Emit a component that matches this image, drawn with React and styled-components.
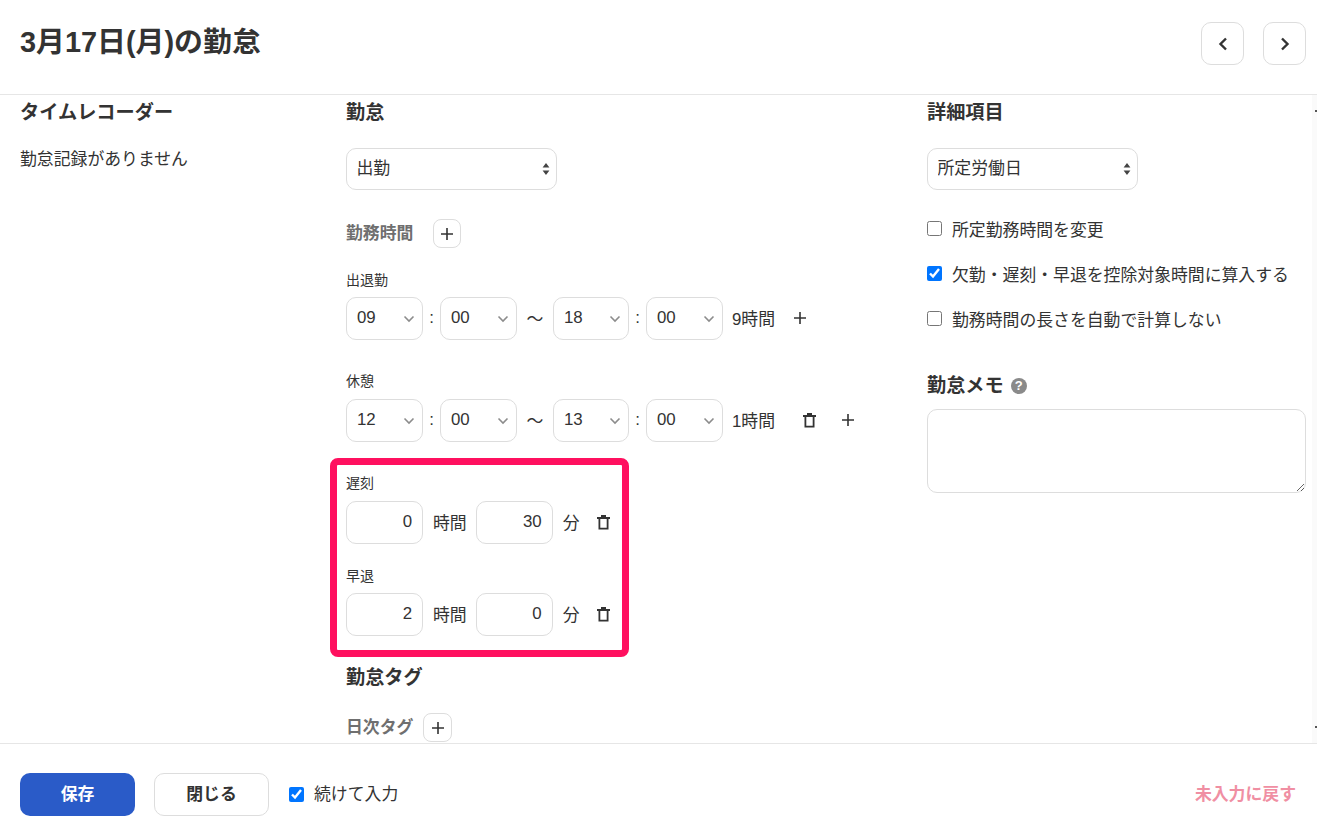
import React from "react";
import styled, { createGlobalStyle } from "styled-components";

const Global = createGlobalStyle`
  html, body { margin: 0; padding: 0; background: #fff; }
  body {
    font-family: "Liberation Sans", "Noto Sans CJK JP", sans-serif;
    font-size: 16.85px;
    color: #333;
    overflow: hidden;
  }
  * { box-sizing: border-box; }
`;

const Page = styled.div`
  width: 1317px;
  height: 837px;
  display: flex;
  flex-direction: column;
`;

const Header = styled.header`
  height: 95px;
  flex: none;
  border-bottom: 1px solid #e6e6e6;
  padding: 23px 11px 0 20px;
  display: flex;
  justify-content: space-between;
  align-items: flex-start;
`;

const Title = styled.h1`
  margin: 0;
  font-size: 28.9px;
  line-height: 38px;
  font-weight: 700;
`;

const NavGroup = styled.div`
  display: flex;
  gap: 19px;
  margin-top: -1px;
`;

const NavButton = styled.button`
  width: 43px;
  height: 43px;
  padding: 0;
  background: #fff;
  border: 1px solid #ddd;
  border-radius: 10px;
  color: #333;
  display: flex;
  align-items: center;
  justify-content: center;
`;

const Body = styled.main`
  position: relative;
  flex: 1;
  min-height: 0;
  overflow: hidden;
  padding: 6px 11px 0 20px;
  display: grid;
  grid-template-columns: 326px 581px 379px;
  align-items: start;
`;

const ScrollRail = styled.div`
  position: absolute;
  top: 0;
  right: 0;
  bottom: 0;
  width: 5px;
  background: #fafafa;

  &::before,
  &::after {
    content: "";
    position: absolute;
    right: 0;
    width: 2px;
    height: 2px;
    background: #555;
  }
  &::before { top: 15px; }
  &::after { bottom: 15px; }
`;

const Column = styled.section`
  display: flex;
  flex-direction: column;
  align-items: flex-start;
`;

const Heading = styled.h2`
  margin: ${(p) => p.$mt || 0}px 0 0;
  font-size: 19.2px;
  line-height: 24px;
  font-weight: 700;
`;

const Paragraph = styled.p`
  margin: 23px 0 0;
  line-height: 24px;
`;

const SelectWrap = styled.div`
  position: relative;
  width: ${(p) => p.$w}px;
  height: ${(p) => p.$h}px;
  flex: none;
  margin-top: ${(p) => p.$mt || 0}px;
`;

const Select = styled.select`
  appearance: none;
  width: 100%;
  height: 100%;
  border: 1px solid #ddd;
  border-radius: 10px;
  background: #fff;
  color: #333;
  font: inherit;
  padding: 0 10px 2px ${(p) => p.$pl || 10}px;
  outline: none;
`;

const SelectIcon = styled.svg`
  position: absolute;
  pointer-events: none;
  top: 50%;
  right: ${(p) => p.$r}px;
  transform: translateY(-50%);
`;

const SubHeadRow = styled.div`
  display: flex;
  align-items: center;
  margin-top: ${(p) => p.$mt}px;
  gap: ${(p) => p.$gap}px;
`;

const SubHead = styled.h3`
  margin: 0;
  font-size: 16.85px;
  line-height: 24px;
  font-weight: 700;
  color: #6f6f6f;
`;

const AddButton = styled.button`
  width: ${(p) => p.$w}px;
  height: 29px;
  padding: 0;
  background: #fff;
  border: 1px solid #ddd;
  border-radius: 8px;
  color: #333;
  display: flex;
  align-items: center;
  justify-content: center;
`;

const FieldLabel = styled.div`
  font-size: 14px;
  line-height: 18px;
  margin-top: ${(p) => p.$mt}px;
`;

const TimeRow = styled.div`
  display: flex;
  align-items: center;
  height: 43px;
  margin-top: ${(p) => p.$mt}px;
`;

const Colon = styled.span`
  width: 17px;
  text-align: center;
  flex: none;
  padding-bottom: 2px;
`;

const Tilde = styled.span`
  width: 36px;
  text-align: center;
  flex: none;
  padding-bottom: 2px;
`;

const Duration = styled.span`
  margin-left: 9px;
  width: 44px;
  white-space: nowrap;
  padding-bottom: 3px;
`;

const IconSlot = styled.span`
  display: flex;
  align-items: center;
  justify-content: center;
  width: 16px;
  flex: none;
  color: #333;
  margin-left: ${(p) => p.$ml}px;
  padding-bottom: 1px;
`;

const Highlight = styled.div`
  width: 299px;
  height: 199px;
  margin: 16px 0 0 -16px;
  border: 7px solid #ff105f;
  border-radius: 8px;
  padding: 9px 9px 0;
`;

const NumberInput = styled.input`
  width: 77px;
  height: 43px;
  flex: none;
  margin-left: ${(p) => p.$ml || 0}px;
  border: 1px solid #ddd;
  border-radius: 10px;
  background: #fff;
  color: #333;
  font: inherit;
  text-align: right;
  padding: 0 10px 2px;
  outline: none;
`;

const Unit = styled.span`
  flex: none;
  margin-left: 10px;
  padding-bottom: 3px;
`;

const CheckRow = styled.label`
  display: flex;
  align-items: center;
  gap: 10px;
  height: 24px;
  margin-top: ${(p) => p.$mt}px;
`;

const Check = styled.input`
  width: 15px;
  height: 15px;
  margin: 0;
  flex: none;
  accent-color: #0075ff;
`;

const MemoHead = styled.div`
  display: flex;
  align-items: center;
  gap: 7px;
  margin-top: 44px;
`;

const HelpDot = styled.span`
  width: 16px;
  height: 16px;
  border-radius: 50%;
  background: #8a8a8a;
  color: #fff;
  font-size: 13px;
  font-weight: 700;
  line-height: 16px;
  text-align: center;
`;

const Memo = styled.textarea`
  width: 379px;
  height: 84px;
  margin-top: 11px;
  border: 1px solid #ddd;
  border-radius: 10px;
  background: #fff;
  font: inherit;
  outline: none;
  display: block;
`;

const Footer = styled.footer`
  height: 94px;
  flex: none;
  border-top: 1px solid #e6e6e6;
  padding: 29px 21px 0 20px;
  display: flex;
  align-items: flex-start;
`;

const PrimaryButton = styled.button`
  width: 115px;
  height: 43px;
  padding: 0 0 4px;
  border: none;
  border-radius: 10px;
  background: #2a5bc8;
  color: #fff;
  font: inherit;
  font-weight: 700;
`;

const SecondaryButton = styled.button`
  width: 115px;
  height: 43px;
  padding: 0 0 4px;
  margin-left: 19px;
  border: 1px solid #ddd;
  border-radius: 10px;
  background: #fff;
  color: #333;
  font: inherit;
  font-weight: 700;
`;

const FooterCheck = styled.label`
  display: flex;
  align-items: center;
  gap: 10px;
  height: 43px;
  margin-left: 20px;
`;

const FooterCaption = styled.span`
  padding-bottom: 4px;
`;

const ResetLink = styled.a`
  margin-left: auto;
  line-height: 43px;
  font-weight: 700;
  color: #f08fa3;
`;

const Chevron = () => (
  <SelectIcon $r={8} width="12" height="8" viewBox="0 0 12 8" fill="none" stroke="#8c8c8c" strokeWidth="1.6">
    <path d="M1.5 1.5 6 6l4.5-4.5" />
  </SelectIcon>
);

const Updown = () => (
  <SelectIcon $r={7} width="8" height="14" viewBox="0 0 8 14" fill="#444">
    <path d="M4 1 7.4 5.6H.6zM4 13 .6 8.4h6.8z" />
  </SelectIcon>
);

const Plus = () => (
  <svg width="12" height="12" viewBox="0 0 12 12" stroke="#333" strokeWidth="1.6" fill="none">
    <path d="M6 0v12M0 6h12" />
  </svg>
);

const Trash = () => (
  <svg width="13" height="15" viewBox="0 0 13 15" fill="none" stroke="#333" strokeWidth="1.8">
    <path d="M0 3h13M4 1h5" />
    <path d="M2.4 3v10.6h8.2V3" />
  </svg>
);

const Nav = ({ d, label }) => (
  <NavButton aria-label={label}>
    <svg width="10" height="14" viewBox="0 0 10 14" fill="none" stroke="#333" strokeWidth="2.4">
      <path d={d} />
    </svg>
  </NavButton>
);

const TimeSelect = ({ value, w = 77 }) => (
  <SelectWrap $w={w} $h={43}>
    <Select defaultValue={value}>
      <option>{value}</option>
    </Select>
    <Chevron />
  </SelectWrap>
);

const TimeRange = ({ a, b, c, d, mt, children }) => (
  <TimeRow $mt={mt}>
    <TimeSelect value={a} />
    <Colon>:</Colon>
    <TimeSelect value={b} />
    <Tilde>〜</Tilde>
    <TimeSelect value={c} w={76} />
    <Colon>:</Colon>
    <TimeSelect value={d} />
    {children}
  </TimeRow>
);

const AmountRow = ({ h, m, mt }) => (
  <TimeRow $mt={mt}>
    <NumberInput defaultValue={h} />
    <Unit>時間</Unit>
    <NumberInput defaultValue={m} $ml={9} />
    <Unit>分</Unit>
    <IconSlot $ml={16}><Trash /></IconSlot>
  </TimeRow>
);

const BigSelect = ({ value }) => (
  <SelectWrap $w={211} $h={42} $mt={23}>
    <Select $pl={9.5} defaultValue={value}>
      <option>{value}</option>
    </Select>
    <Updown />
  </SelectWrap>
);

export default function App() {
  return (
    <Page>
      <Global />
      <Header>
        <Title>3月17日(月)の勤怠</Title>
        <NavGroup>
          <Nav d="M8 1.5 2.5 7 8 12.5" label="前" />
          <Nav d="M2 1.5 7.5 7 2 12.5" label="次" />
        </NavGroup>
      </Header>
      <Body>
        <Column>
          <Heading>タイムレコーダー</Heading>
          <Paragraph>勤怠記録がありません</Paragraph>
        </Column>
        <Column>
          <Heading>勤怠</Heading>
          <BigSelect value="出勤" />
          <SubHeadRow $mt={29} $gap={20}>
            <SubHead>勤務時間</SubHead>
            <AddButton $w={28}><Plus /></AddButton>
          </SubHeadRow>
          <FieldLabel $mt={23}>出退勤</FieldLabel>
          <TimeRange a="09" b="00" c="18" d="00" mt={8}>
            <Duration>9時間</Duration>
            <IconSlot $ml={16}><Plus /></IconSlot>
          </TimeRange>
          <FieldLabel $mt={32}>休憩</FieldLabel>
          <TimeRange a="12" b="00" c="13" d="00" mt={9}>
            <Duration>1時間</Duration>
            <IconSlot $ml={25}><Trash /></IconSlot>
            <IconSlot $ml={23}><Plus /></IconSlot>
          </TimeRange>
          <Highlight>
            <FieldLabel $mt={0}>遅刻</FieldLabel>
            <AmountRow h="0" m="30" mt={9} />
            <FieldLabel $mt={23}>早退</FieldLabel>
            <AmountRow h="2" m="0" mt={8} />
          </Highlight>
          <Heading $mt={9}>勤怠タグ</Heading>
          <SubHeadRow $mt={23} $gap={10}>
            <SubHead>日次タグ</SubHead>
            <AddButton $w={29}><Plus /></AddButton>
          </SubHeadRow>
        </Column>
        <Column>
          <Heading>詳細項目</Heading>
          <BigSelect value="所定労働日" />
          <CheckRow $mt={26}><Check type="checkbox" />所定勤務時間を変更</CheckRow>
          <CheckRow $mt={21}><Check type="checkbox" defaultChecked />欠勤・遅刻・早退を控除対象時間に算入する</CheckRow>
          <CheckRow $mt={21}><Check type="checkbox" />勤務時間の長さを自動で計算しない</CheckRow>
          <MemoHead>
            <Heading>勤怠メモ</Heading>
            <HelpDot>?</HelpDot>
          </MemoHead>
          <Memo />
        </Column>
        <ScrollRail />
      </Body>
      <Footer>
        <PrimaryButton>保存</PrimaryButton>
        <SecondaryButton>閉じる</SecondaryButton>
        <FooterCheck><Check type="checkbox" defaultChecked /><FooterCaption>続けて入力</FooterCaption></FooterCheck>
        <ResetLink>未入力に戻す</ResetLink>
      </Footer>
    </Page>
  );
}
